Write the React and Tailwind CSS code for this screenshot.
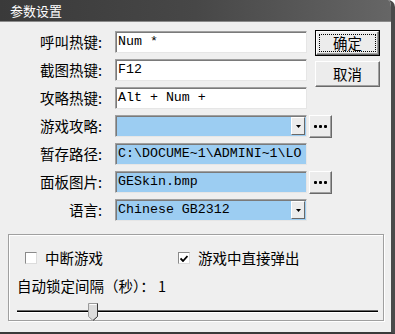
import React from 'react'

const cjk = { fontFamily: '"Noto Sans CJK SC", "Liberation Sans", sans-serif' }
const mono = { fontFamily: '"Liberation Mono", "Noto Sans CJK SC", monospace' }

function Field({ value = '', blue = false, combo = false }) {
  return (
    <div
      className={`relative w-[192px] h-[22px] flex items-center overflow-hidden border border-t-[#a0a0a0] border-l-[#a0a0a0] border-r-[#e6e6e6] border-b-[#e6e6e6] shadow-[inset_1px_1px_0_#7a7a7a] ${
        blue ? 'bg-[#9ccdf2]' : 'bg-white'
      }`}
    >
      <span className="pl-[2px] text-[13.3px] leading-none text-black whitespace-nowrap" style={mono}>
        {value}
      </span>
      {combo && (
        <div className="absolute right-[1px] top-[1px] bottom-[1px] w-[14px] bg-[#ececec] border border-t-white border-l-white border-r-[#696969] border-b-[#696969] flex items-center justify-center">
          <svg width="5" height="3" viewBox="0 0 5 3">
            <path d="M0 0h5L2.5 3z" fill="#000" />
          </svg>
        </div>
      )}
    </div>
  )
}

function DotsButton() {
  return (
    <div className="w-[23px] h-[23px] ml-[2px] bg-[#ececec] border border-t-white border-l-white border-r-[#696969] border-b-[#696969] shadow-[inset_-1px_-1px_0_#a0a0a0] flex items-center justify-center gap-[2px]">
      <span className="w-[3px] h-[3px] bg-black rounded-[1px]" />
      <span className="w-[3px] h-[3px] bg-black rounded-[1px]" />
      <span className="w-[3px] h-[3px] bg-black rounded-[1px]" />
    </div>
  )
}

function Row({ label, children }) {
  return (
    <div className="flex items-center h-[22px]">
      <div className="w-[102px] text-right text-[14.5px] leading-none text-black" style={cjk}>
        {label}
      </div>
      <div className="ml-[13px] flex items-center">{children}</div>
    </div>
  )
}

function Checkbox({ checked, label }) {
  return (
    <div className="flex items-center">
      <div className="w-[12px] h-[12px] bg-white border border-t-[#8a8a8a] border-l-[#8a8a8a] border-r-[#dcdcdc] border-b-[#dcdcdc] flex items-center justify-center">
        {checked && (
          <svg width="8" height="7" viewBox="0 0 8 7">
            <path d="M0.5 3.5L3 6L7.5 1" stroke="#000" strokeWidth="1.8" fill="none" />
          </svg>
        )}
      </div>
      <span className="ml-[8px] text-[14.5px] leading-none text-black" style={cjk}>
        {label}
      </span>
    </div>
  )
}

export default function App() {
  return (
    <div className="w-[395px] h-[334px] bg-[#efefef] flex flex-col overflow-hidden rounded-tr-[7px] border-r-[4px] border-r-[#4a4a4a] border-b-[2px] border-b-[#3a3a3a]">
      {/* Title bar */}
      <div className="h-[22px] shrink-0 flex items-center pl-[10px] bg-gradient-to-r from-[#3a3a3a] via-[#474747] to-[#666666] border-b border-b-[#8a8a8a]">
        <span className="text-[13px] leading-none text-white" style={cjk}>
          参数设置
        </span>
      </div>

      {/* Form */}
      <div className="flex flex-col pt-[9px]">
        <div className="flex items-start">
          <div className="flex flex-col gap-[6px]">
            <Row label="呼叫热键:">
              <Field value="Num *" />
            </Row>
            <Row label="截图热键:">
              <Field value="F12" />
            </Row>
            <Row label="攻略热键:">
              <Field value="Alt + Num +" />
            </Row>
          </div>
          <div className="ml-[8px] -mt-[1px] flex flex-col gap-[5px]">
            <div className="w-[65px] h-[26px] border border-black">
              <div className="w-full h-full bg-[#ececec] border border-t-white border-l-white border-r-[#696969] border-b-[#696969] shadow-[inset_-1px_-1px_0_#a0a0a0] p-[2px]">
                <div className="w-full h-full border border-dotted border-black flex items-center justify-center text-[14.5px] leading-none text-black" style={cjk}>
                  确定
                </div>
              </div>
            </div>
            <div className="w-[65px] h-[26px] bg-[#ececec] border border-t-white border-l-white border-r-[#696969] border-b-[#696969] shadow-[inset_-1px_-1px_0_#a0a0a0] flex items-center justify-center text-[14.5px] leading-none text-black" style={cjk}>
              取消
            </div>
          </div>
        </div>

        <div className="flex flex-col gap-[6px] mt-[6px]">
          <Row label="游戏攻略:">
            <Field blue combo />
            <DotsButton />
          </Row>
          <Row label="暂存路径:">
            <Field blue value={'C:\\DOCUME~1\\ADMINI~1\\LO'} />
          </Row>
          <Row label="面板图片:">
            <Field blue value="GESkin.bmp" />
            <DotsButton />
          </Row>
          <Row label="语言:">
            <Field blue combo value="Chinese GB2312" />
          </Row>
        </div>
      </div>

      {/* Group box */}
      <div className="mt-[13px] ml-[8px] w-[376px] h-[87px] border border-[#a0a0a0] shadow-[inset_1px_1px_0_#ffffff,1px_1px_0_#ffffff] flex flex-col pt-[16px]">
        <div className="flex items-center pl-[16px]">
          <div className="w-[153px]">
            <Checkbox label="中断游戏" />
          </div>
          <Checkbox checked label="游戏中直接弹出" />
        </div>
        <div className="mt-[13px] pl-[8px] text-[14.5px] leading-none text-black" style={cjk}>
          自动锁定间隔（秒）： 1
        </div>
        <div className="relative mt-[10px] ml-[8px] w-[361px] h-[18px] flex items-center">
          <div className="w-full h-[3px] border-t border-t-[#6a6a6a] border-b border-b-white bg-black" />
          <svg className="absolute left-[71px] top-0" width="10" height="18" viewBox="0 0 10 18">
            <path d="M0.5 0.5H9.5V13.5L5 17.5L0.5 13.5Z" fill="#dcdcdc" stroke="#9a9a9a" />
            <path d="M9.5 0.5V13.5L5 17.5" fill="none" stroke="#3a3a3a" />
            <path d="M1.5 1.5H8.5" stroke="#ffffff" />
          </svg>
        </div>
      </div>
    </div>
  )
}
